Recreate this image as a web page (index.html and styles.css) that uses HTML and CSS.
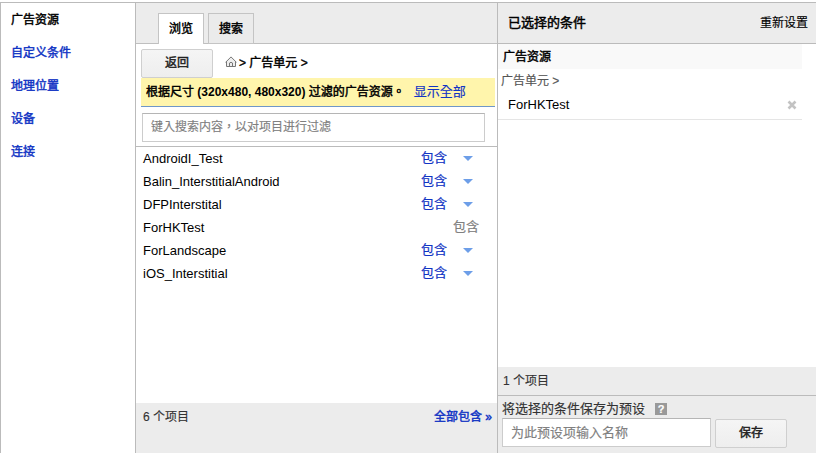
FILE: index.html
```html
<!DOCTYPE html>
<html lang="zh-CN">
<head>
<meta charset="utf-8">
<title>广告资源</title>
<link rel="stylesheet" href="styles.css">
</head>
<body>
<div class="picker">
  <nav class="side">
    <a class="current">广告资源</a>
    <a>自定义条件</a>
    <a>地理位置</a>
    <a>设备</a>
    <a>连接</a>
  </nav>
  <section class="browse">
    <div class="tabs">
      <div class="tab active">浏览</div>
      <div class="tab">搜索</div>
    </div>
    <div class="crumbs">
      <button class="btn">返回</button>
      <svg class="home" width="12" height="12" viewBox="0 0 12 12"><path d="M1.500 5.500v5h9v-5L6 1z" fill="#eee"/><path d="M.5 6.400 6 .9l5.500 5.500M1.500 5.500v5h9v-5M4.500 10.500V7Q6 5.600 7.500 7v3.500" fill="none" stroke="#777" stroke-width="1"/></svg>
      <span class="path">&gt; <b>广告单元</b> &gt;</span>
    </div>
    <div class="notice" lang="zh-TW"><b>根据尺寸 <span class="sizes">(320x480, 480x320)</span> 过滤的广告资源。</b><a>显示全部</a></div>
    <div class="search"><input class="field" lang="zh-TW" type="text" placeholder="键入搜索内容，以对项目进行过滤"></div>
    <ul class="list">
      <li><span>AndroidI_Test</span><a>包含</a><i class="arrow"></i></li>
      <li><span>Balin_InterstitialAndroid</span><a>包含</a><i class="arrow"></i></li>
      <li><span>DFPInterstital</span><a>包含</a><i class="arrow"></i></li>
      <li class="used"><span>ForHKTest</span><em>包含</em></li>
      <li><span>ForLandscape</span><a>包含</a><i class="arrow"></i></li>
      <li><span>iOS_Interstitial</span><a>包含</a><i class="arrow"></i></li>
    </ul>
    <div class="total"><span>6 个项目</span><a>全部包含 »</a></div>
  </section>
  <section class="chosen">
    <div class="head"><b>已选择的条件</b><span>重新设置</span></div>
    <div class="picked">
      <div class="group">广告资源</div>
      <div class="parent">广告单元 &gt;</div>
      <div class="item"><span>ForHKTest</span><svg width="10" height="10" viewBox="0 0 10 10"><path d="M1.500 1.500l7 7M8.500 1.500l-7 7" stroke="#c3c3c3" stroke-width="2.600"/></svg></div>
    </div>
    <div class="count">1 个项目</div>
    <div class="save">
      <div class="label"><span>将选择的条件保存为预设</span><span class="help">?</span></div>
      <div class="form"><input class="field" type="text" placeholder="为此预设项输入名称"><button class="btn">保存</button></div>
    </div>
  </section>
</div>
</body>
</html>
```
FILE: styles.css
```css
* { box-sizing: border-box; }
body {
  margin: 0;
  background: #fff;
  color: #000;
  font: 12px/16px "Liberation Sans", "Noto Sans CJK SC", sans-serif;
  -webkit-text-stroke: .15px;
  white-space: nowrap;
  overflow: hidden;
}
a { color: #1134c4; }
input, button { font: inherit; color: inherit; margin: 0; }
b, .side, .tab, .btn, .total a, .group {
  font-weight: 400;
  -webkit-text-stroke: .45px;
}
.picker {
  display: grid;
  grid-template-columns: 134px 362px 1fr;
  width: 816px;
  height: 451px;
  margin-top: 2px;
  border-top: 1px solid #bbb;
  border-left: 1px solid #bbb;
}
.side {
  display: flex;
  flex-direction: column;
  gap: 17px;
  padding: 9px 0 0 10px;
}
.side .current { color: #000; }
.browse {
  display: flex;
  flex-direction: column;
  border-left: 1px solid #bbb;
  min-height: 0;
}
.tabs {
  display: flex;
  flex: none;
  align-items: flex-end;
  gap: 4px;
  height: 41px;
  padding-left: 22px;
  background: #ececec;
  box-shadow: inset 0 -1px #bfbfbf;
}
.tab {
  width: 46px;
  height: 31px;
  padding-top: 7px;
  border: 1px solid #c4c4c4;
  background: #ebebeb;
  text-align: center;
}
.tab.active { background: #fff; border-bottom: 0; }
.crumbs {
  display: flex;
  align-items: center;
  height: 34px;
  padding: 5px 0 0 5px;
}
.btn {
  width: 72px;
  height: 29px;
  padding: 0 0 2px;
  border: 1px solid #cfcfcf;
  border-radius: 2px;
  background: linear-gradient(#f5f5f5, #eee);
  color: #222;
}
.home { margin: -3px 2px 0 12px; }
.path { margin-top: -2px; -webkit-text-stroke: .4px; }
.notice {
  height: 29px;
  margin: 0 2px 0 5px;
  padding: 6px 0 0 5px;
  background: #fff5ac;
  border-bottom: 1px solid #6f97c8;
  font-family: "Liberation Sans", "Noto Sans CJK TC", sans-serif;
}
.sizes { font-weight: 700; -webkit-text-stroke: 0; }
.notice a { margin-left: 9px; font-size: 13px; }
.search { height: 40px; padding: 6px 0 0 6px; border-bottom: 1px solid #bbb; }
.field {
  display: block;
  width: 343px;
  height: 29px;
  padding: 0 8px;
  border: 1px solid #ccc;
  border-top-color: #b5b5b5;
  background: #fff;
}
.search .field { padding-bottom: 2px; font-family: "Liberation Sans", "Noto Sans CJK TC", sans-serif; }
.field::placeholder { color: #808080; opacity: 1; }
.list { flex: 1; list-style: none; margin: 0; padding: 0 18px 0 7px; font-size: 13px; }
.list li { display: flex; align-items: center; height: 23px; }
.list span { flex: 1; -webkit-text-stroke: 0; }
.list a { margin-right: 16px; }
.list em { font-style: normal; color: #808080; }
.list a, .list em { padding-bottom: 1px; -webkit-text-stroke: .2px; }
.arrow {
  width: 10px;
  height: 5px;
  margin-right: 6px;
  background: #6d9ee8;
  clip-path: polygon(0 0, 100% 0, 50% 100%);
}
.total {
  display: flex;
  justify-content: space-between;
  height: 50px;
  padding: 6px 5px 0 7px;
  background: #ececec;
  color: #333;
}
.chosen {
  display: flex;
  flex-direction: column;
  border-left: 1px solid #bbb;
}
.head {
  display: flex;
  justify-content: space-between;
  align-items: center;
  height: 41px;
  padding: 0 8px 0 10px;
  background: #ececec;
  border-bottom: 1px solid #bbb;
}
.head b { font-size: 13px; }
.picked { flex: 1; width: 304px; }
.group { height: 25px; padding: 5px 5px 0; background: #f9f9f9; }
.parent { height: 22px; padding: 4px 3px 0; color: #555; }
.item {
  display: flex;
  justify-content: space-between;
  align-items: center;
  height: 29px;
  padding: 0 5px 0 10px;
  border-bottom: 1px solid #e5e5e5;
  font-size: 13px;
  -webkit-text-stroke: 0;
}
.count { height: 28px; padding: 6px 5px 0; background: #ececec; color: #333; }
.save {
  height: 58px;
  padding: 4px 0 0 4px;
  border-top: 1px solid #bbb;
  background: #ececec;
  font-size: 13px;
  color: #333;
}
.label { display: flex; align-items: center; gap: 10px; height: 18px; }
.help {
  width: 12px;
  height: 12px;
  background: #999;
  color: #fff;
  font: bold 11px/12px "Liberation Sans", sans-serif;
  text-align: center;
}
.form { display: flex; gap: 4px; }
.form .field { width: 209px; }
.form .btn { margin-top: 1px; font-size: 12px; }
```
